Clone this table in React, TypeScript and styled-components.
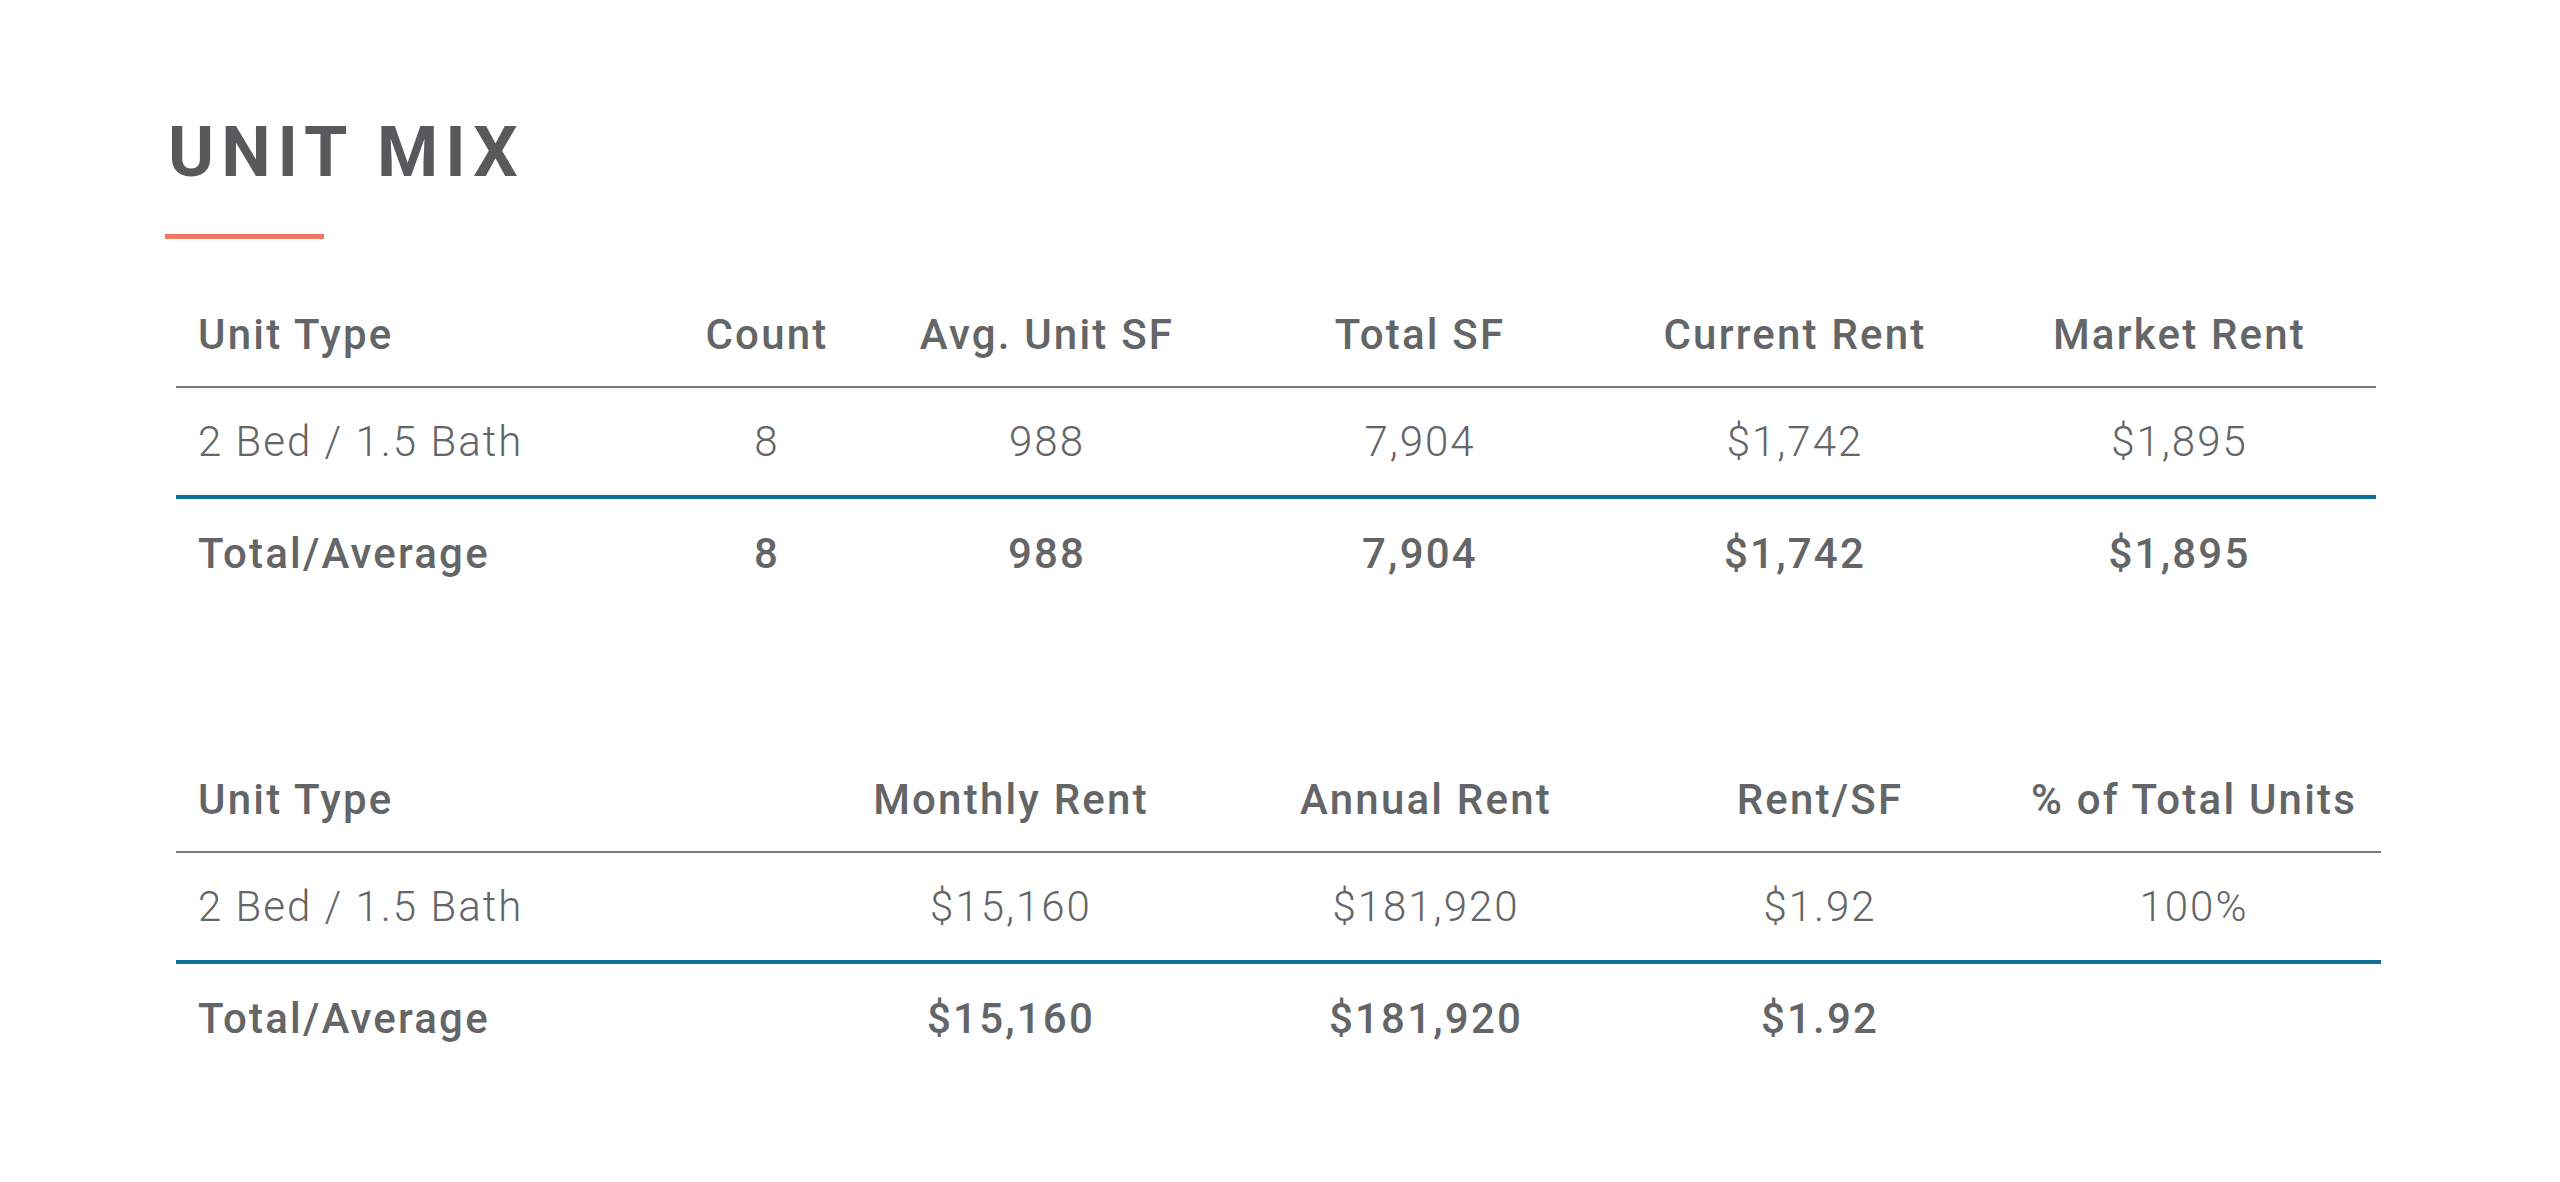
import React from "react";
import styled, { createGlobalStyle } from "styled-components";

const Global = createGlobalStyle`
  html, body { margin: 0; padding: 0; background: #ffffff; }
  body { font-family: "Roboto", "Liberation Sans", sans-serif; }
`;

const Page = styled.main`
  width: 2560px;
  min-height: 1182px;
  box-sizing: border-box;
  padding: 112px 0 0 165px;
  background: #ffffff;
`;

const Title = styled.h1`
  margin: 0;
  font-family: "Roboto", "Liberation Sans", sans-serif;
  font-weight: 700;
  font-size: 70px;
  line-height: 80px;
  letter-spacing: 7px;
  color: #58595b;
  padding-left: 3px;
`;

const Accent = styled.div`
  width: 159px;
  height: 5px;
  margin-top: 42px;
  background: #f47762;
`;

const Tables = styled.div`
  display: flex;
  flex-direction: column;
  gap: 140px;
  margin-top: 43px;
  padding-left: 11px;
`;

const Table = styled.table<{ $width: number }>`
  width: ${(p) => p.$width}px;
  border-collapse: collapse;
  table-layout: fixed;
  font-family: "Roboto", "Liberation Sans", sans-serif;
  color: #646567;
`;

const Col = styled.col<{ $w: number }>`
  width: ${(p) => p.$w}px;
`;

const HeadCell = styled.th<{ $left?: boolean }>`
  height: 104px;
  padding: 0;
  padding-left: ${(p) => (p.$left ? "22px" : "0")};
  text-align: ${(p) => (p.$left ? "left" : "center")};
  font-size: 42px;
  font-weight: 500;
  letter-spacing: 2.2px;
  vertical-align: middle;
  border-bottom: 2px solid #7a7a7a;
  white-space: nowrap;
`;

const Cell = styled.td<{ $left?: boolean; $total?: boolean }>`
  height: ${(p) => (p.$total ? 108 : 107)}px;
  padding: 0;
  padding-left: ${(p) => (p.$left ? "22px" : "0")};
  text-align: ${(p) => (p.$left ? "left" : "center")};
  font-size: 42px;
  font-weight: ${(p) => (p.$total ? 500 : 300)};
  letter-spacing: ${(p) => (p.$total ? "2.2px" : "2px")};
  vertical-align: middle;
  white-space: nowrap;
  border-bottom: ${(p) => (p.$total ? "none" : "4px solid #0f6f97")};
`;

type TableSpec = {
  width: number;
  cols: number[];
  head: string[];
  row: string[];
  total: string[];
};

const mix: TableSpec = {
  width: 2200,
  cols: [497, 188, 372, 374, 376, 393],
  head: ["Unit Type", "Count", "Avg. Unit SF", "Total SF", "Current Rent", "Market Rent"],
  row: ["2 Bed / 1.5 Bath", "8", "988", "7,904", "$1,742", "$1,895"],
  total: ["Total/Average", "8", "988", "7,904", "$1,742", "$1,895"],
};

const rent: TableSpec = {
  width: 2205,
  cols: [627, 416, 414, 374, 374],
  head: ["Unit Type", "Monthly Rent", "Annual Rent", "Rent/SF", "% of Total Units"],
  row: ["2 Bed / 1.5 Bath", "$15,160", "$181,920", "$1.92", "100%"],
  total: ["Total/Average", "$15,160", "$181,920", "$1.92", ""],
};

function DataTable({ spec }: { spec: TableSpec }) {
  return (
    <Table $width={spec.width}>
      <colgroup>
        {spec.cols.map((w, i) => (
          <Col key={i} $w={w} />
        ))}
      </colgroup>
      <thead>
        <tr>
          {spec.head.map((h, i) => (
            <HeadCell key={i} $left={i === 0}>
              {h}
            </HeadCell>
          ))}
        </tr>
      </thead>
      <tbody>
        <tr>
          {spec.row.map((c, i) => (
            <Cell key={i} $left={i === 0}>
              {c}
            </Cell>
          ))}
        </tr>
        <tr>
          {spec.total.map((c, i) => (
            <Cell key={i} $left={i === 0} $total>
              {c}
            </Cell>
          ))}
        </tr>
      </tbody>
    </Table>
  );
}

export default function App() {
  return (
    <>
      <Global />
      <Page>
        <Title>UNIT MIX</Title>
        <Accent />
        <Tables>
          <DataTable spec={mix} />
          <DataTable spec={rent} />
        </Tables>
      </Page>
    </>
  );
}
